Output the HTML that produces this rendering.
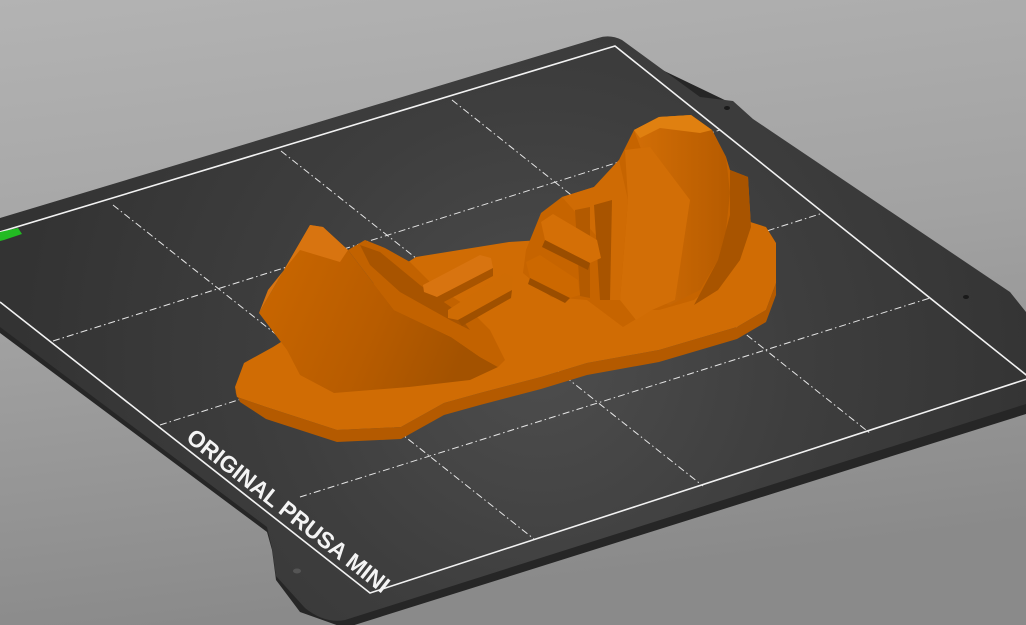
<!DOCTYPE html>
<html><head><meta charset="utf-8"><style>
html,body{margin:0;padding:0;width:1026px;height:625px;overflow:hidden;background:#a0a0a0}
svg{display:block}
</style></head><body>
<svg width="1026" height="625" viewBox="0 0 1026 625" xmlns="http://www.w3.org/2000/svg">
<defs>
<linearGradient id="bg" x1="0" y1="0" x2="0.2" y2="1">
<stop offset="0" stop-color="#b3b3b3"/><stop offset="0.5" stop-color="#a2a2a2"/><stop offset="1" stop-color="#8a8a8a"/>
</linearGradient>
<radialGradient id="plate" cx="540" cy="360" r="520" gradientUnits="userSpaceOnUse">
<stop offset="0" stop-color="#4d4d4d"/><stop offset="0.5" stop-color="#3e3e3e"/><stop offset="1" stop-color="#333"/>
</radialGradient>
<linearGradient id="wallL" x1="0" y1="0" x2="1" y2="0.3">
<stop offset="0" stop-color="#cc6800"/><stop offset="0.6" stop-color="#b85c00"/><stop offset="1" stop-color="#a35200"/>
</linearGradient>
<linearGradient id="arch" x1="0" y1="0" x2="1" y2="0">
<stop offset="0" stop-color="#d26e06"/><stop offset="1" stop-color="#b65b00"/>
</linearGradient>
</defs>
<rect width="1026" height="625" fill="url(#bg)"/>
<path d="M0,222 L600,40 L733,104 L753,122 L1010,296 L1026,318 L1026,414 L345,628 L300,612 L276,580 L272,550 L267,532 L0,333 Z" fill="#262626"/>
<path d="M0,218 L598,38 Q610,34 622,40 L700,97 L733,101 L753,119 L1010,292 L1026,312 L1026,404 L345,620 Q325,624 305,608 L276,576 L272,548 L267,527 L0,327 Z" fill="url(#plate)"/>
<path d="M0,232 L615,46 L1030,378 L370,593 L0,302" fill="none" stroke="#f2f2f2" stroke-width="1.6"/>
<g stroke="#e6e6e6" stroke-width="1" stroke-dasharray="7,3,1.5,3" fill="none">
<path d="M113,205 L534,539"/>
<path d="M281,151 L703,486"/>
<path d="M452,100 L871,434"/>
<path d="M53,341 L720,130"/>
<path d="M160,425 L823,213"/>
<path d="M300,497 L930,298"/>
</g>
<path d="M0,232 L18,228 L22,234 L4,240 L0,241Z" fill="#22bb22"/>
<text x="0" y="0" transform="translate(185,440) rotate(38)" font-family="Liberation Sans, sans-serif" font-weight="bold" font-size="23" fill="#f4f4f4" textLength="250" lengthAdjust="spacingAndGlyphs">ORIGINAL PRUSA MINI</text>
<ellipse cx="297" cy="571" rx="4" ry="2.5" fill="#555"/>
<ellipse cx="727" cy="108" rx="3" ry="2" fill="#1a1a1a"/>
<ellipse cx="966" cy="297" rx="3" ry="2" fill="#1a1a1a"/>

<path d="M235,390 L240,402 L266,419 L337,442 L401,439 L444,415 L480,405 L541,389 L587,375 L659,362 L737,339 L766,322 L776,295 L776,283 L766,310 L737,327 L659,350 L587,363 L541,377 L480,393 L444,403 L401,427 L337,430 L266,407 L237,397 Z" fill="#b45a00"/>
<path d="M235,387 L244,363 L273,347 L300,330 L416,257 L509,242 L541,240 L600,225 L700,215 L744,220 L766,227 L776,243 L776,283 L766,310 L737,327 L659,350 L587,363 L541,377 L480,393 L444,403 L401,427 L337,430 L266,407 L237,397 Z" fill="#d06c04"/>

<path d="M310,225 L323,227 L348,250 L394,310 L451,337 L480,357 L498,367 L470,380 L409,387 L334,393 L300,375 L287,350 L259,313 Z" fill="url(#wallL)"/>
<path d="M310,225 L323,227 L348,250 L340,262 L300,250 L268,290 L259,313 Z" fill="#d87410"/>
<path d="M348,250 L365,240 L385,248 L410,262 L430,282 L465,305 L490,330 L505,360 L498,367 L480,357 L451,337 L394,310 Z" fill="#c26200"/>
<path d="M360,245 L380,252 L420,285 L455,310 L470,330 L450,320 L400,292 L370,265 Z" fill="#a85400"/>
<path d="M423,285 L480,255 L491,258 L493,268 L437,297 L424,292 Z" fill="#d87410"/>
<path d="M437,297 L493,268 L493,276 L440,304 Z" fill="#a85400"/>
<path d="M448,310 L505,273 L513,277 L512,290 L458,320 L448,318 Z" fill="#cf6c04"/>
<path d="M458,320 L512,290 L511,298 L462,326 Z" fill="#9f5000"/>

<path d="M619,160 L594,187 L562,197 L541,213 L526,250 L523,273 L551,297 L587,300 L623,327 L651,310 L659,310 L694,300 L730,270 L751,227 L748,177 L730,170 L726,157 L712,130 L691,115 L659,117 L634,130 Z" fill="#c66400"/>
<path d="M634,130 L659,117 L691,115 L712,130 L726,157 L730,193 L726,230 L718,260 L700,290 L670,305 L650,300 L660,200 Z" fill="url(#arch)"/>
<path d="M625,150 L650,147 L690,200 L675,300 L652,310 L636,320 L620,300 L628,200 Z" fill="#d26e06"/>
<path d="M634,130 L659,117 L691,115 L712,130 L700,133 L660,128 L640,138 Z" fill="#e08010"/>
<path d="M730,170 L748,177 L751,227 L740,260 L718,290 L694,305 L718,260 L730,215 Z" fill="#a85400"/>
<path d="M562,197 L594,187 L619,160 L628,200 L620,300 L600,300 L600,240 Z" fill="#cf6b04"/>
<path d="M594,205 L612,200 L610,300 L600,300 Z" fill="#a85400"/>
<path d="M575,210 L590,207 L590,298 L580,296 Z" fill="#b35a00"/>
<path d="M541,222 L553,214 L597,240 L601,258 L590,263 L545,240 Z" fill="#d46f06"/>
<path d="M545,240 L590,263 L588,270 L542,247 Z" fill="#9a4d00"/>
<path d="M526,262 L540,255 L578,280 L580,295 L570,298 L530,278 Z" fill="#cc6800"/>
<path d="M530,278 L570,298 L565,303 L528,284 Z" fill="#9a4d00"/>
</svg>
</body></html>
